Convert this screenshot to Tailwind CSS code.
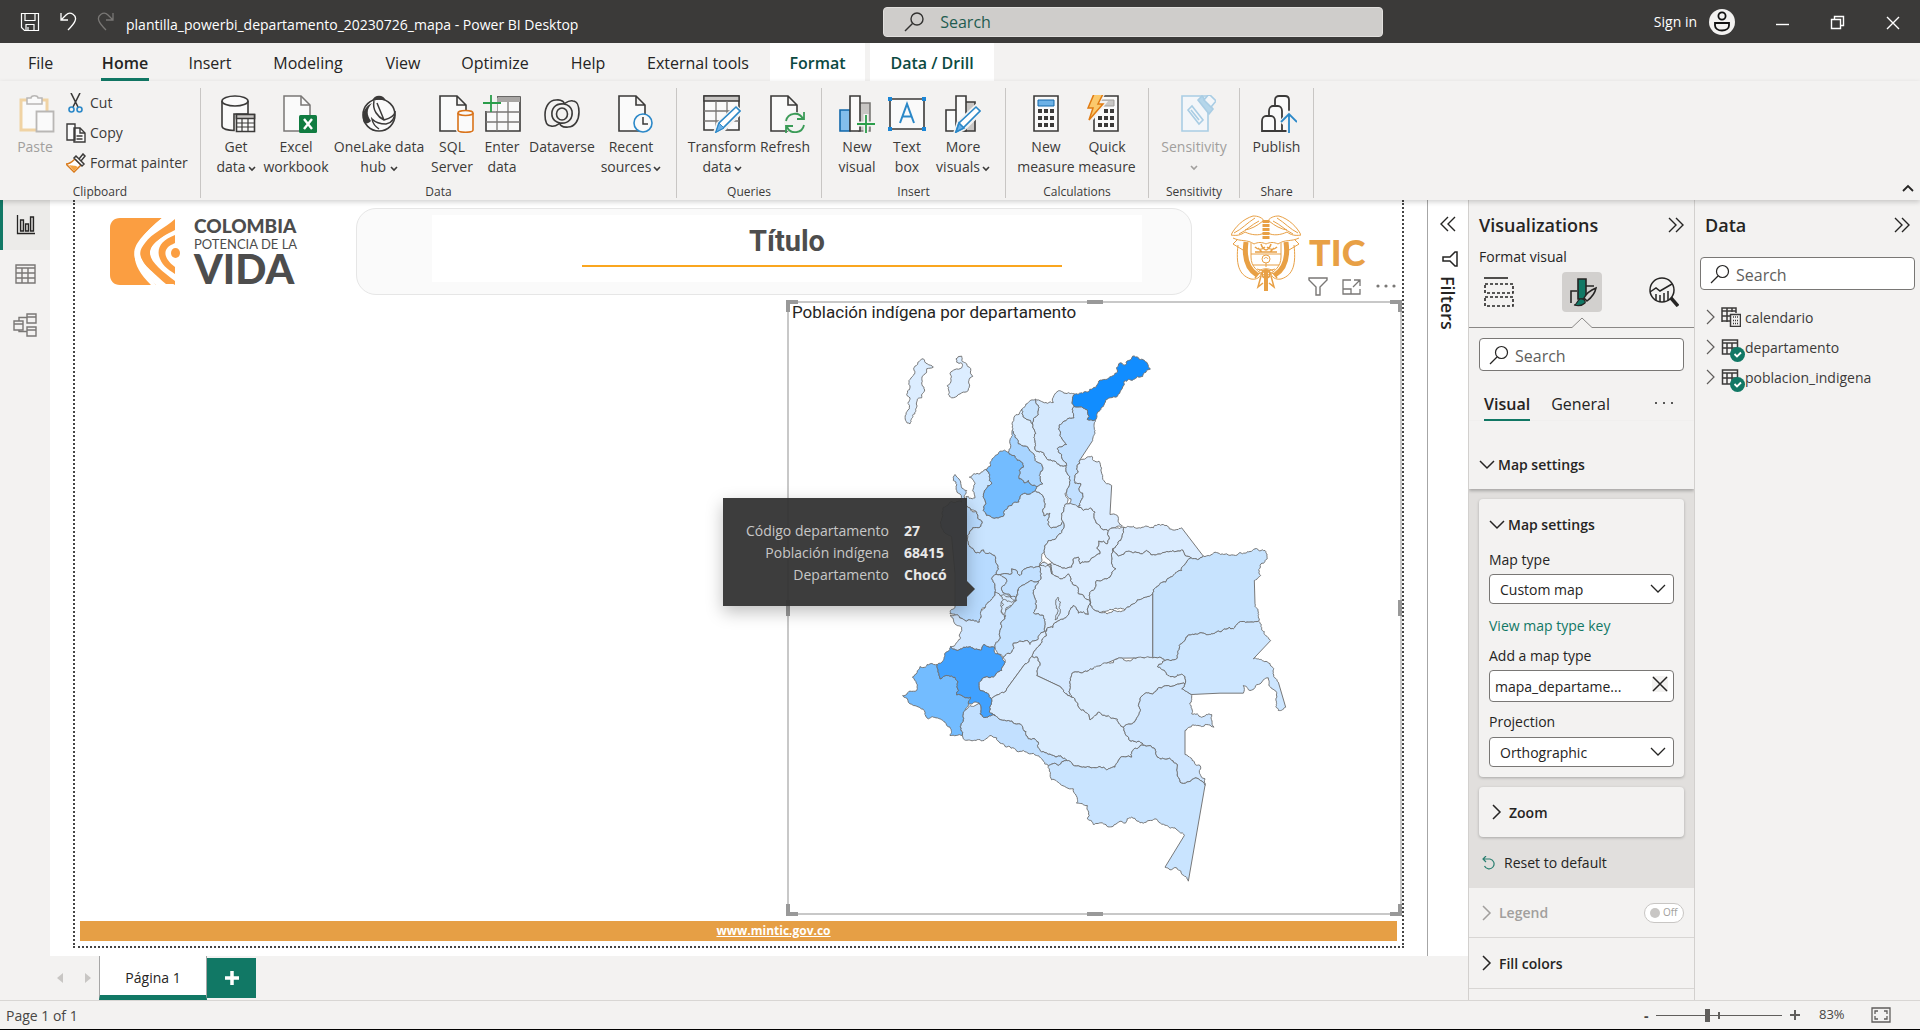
<!DOCTYPE html>
<html lang="en">
<head>
<meta charset="utf-8">
<title>plantilla_powerbi_departamento_20230726_mapa - Power BI Desktop</title>
<script src="https://cdn.jsdelivr.net/npm/@tailwindcss/browser@4"></script>
</head>
<body class="flex h-screen flex-col overflow-hidden border-b border-black bg-[#f3f2f1] font-['Open_Sans',sans-serif] text-[14px] text-[#252423]">

<!-- Title bar -->
<header class="flex h-[43px] shrink-0 items-center bg-[#3b3a39] text-white">
  <div class="flex w-[46%] shrink-0 items-center pl-5">
    <button aria-label="Save" class="w-[22px]"><svg class="h-5 w-5" viewBox="0 0 20 20" fill="none" stroke="#fff" stroke-width="1.2"><path d="M1.5 1.5h17v17H4.500l-3-3zM5 1.500v7h10v-7M6 18.500v-6h8v6M8 15v3"/></svg></button>
    <button aria-label="Undo" class="ml-[17px] w-[20px]"><svg class="h-5 w-5" viewBox="0 0 20 20" fill="none" stroke="#fff" stroke-width="1.3"><path d="M2 1v7h7M2 8l5-5a5.500 5.500 0 0 1 9 6c-1 3-4 6-7 9"/></svg></button>
    <button aria-label="Redo" class="ml-[16px] w-[20px]"><svg class="h-5 w-5" viewBox="0 0 20 20" fill="none" stroke="#797775" stroke-width="1.3"><path d="M18 1v7h-7M18 8l-5-5a5.500 5.500 0 0 0-9 6c1 3 4 6 7 9"/></svg></button>
    <span class="ml-[11px] pt-[6px] text-[14px]">plantilla_powerbi_departamento_20230726_mapa - Power BI Desktop</span>
  </div>
  <label class="flex h-[30px] w-[500px] items-center rounded-sm border border-[#e1dfdd] bg-[#cfcdcb] pl-5">
    <svg class="h-5 w-5" viewBox="0 0 20 20" fill="none" stroke="#323130" stroke-width="1.4"><circle cx="13" cy="7" r="6"/><path d="M8.500 11.500 1 19"/></svg>
    <input type="text" aria-label="Search" placeholder="Search" class="ml-4 w-80 bg-transparent text-[16px] outline-none placeholder:text-[#1f5c50]">
  </label>
  <div class="flex flex-1 items-center justify-end">
    <button class="flex items-center gap-3">Sign in
      <svg class="h-[26px] w-[26px]" viewBox="0 0 26 26"><circle cx="13" cy="13" r="13" fill="#f3f2f1"/><g fill="none" stroke="#111" stroke-width="1.800"><circle cx="13" cy="7" r="3.600"/><path d="M6 14h14v2.500c0 3-3 5-7 5s-7-2-7-5z"/></g></svg>
    </button>
    <button aria-label="Minimize" class="ml-[40px]"><svg class="h-4 w-4" viewBox="0 0 16 16" stroke="#fff" stroke-width="1.400"><path d="M1 10.500h13"/></svg></button>
    <button aria-label="Restore" class="ml-[39px]"><svg class="h-4 w-4" viewBox="0 0 16 16" fill="none" stroke="#fff" stroke-width="1.400"><path d="M1.500 5.500h9v9h-9zM4.500 5V2.500h9v9H11"/></svg></button>
    <button aria-label="Close" class="ml-[39px] mr-[19px]"><svg class="h-4 w-4" viewBox="0 0 16 16" stroke="#fff" stroke-width="1.400"><path d="m2 3 12 12M14 3 2 15"/></svg></button>
  </div>
</header>

<!-- Ribbon tabs -->
<nav class="flex h-[38px] shrink-0 pl-2 text-[16px]">
  <a href="#" class="w-[73px] pl-5 leading-[40px]">File</a>
  <a href="#" class="w-[88px] px-5 font-semibold"><span class="block h-[38px] border-b-3 border-[#117865] text-center leading-[40px]">Home</span></a>
  <a href="#" class="w-[82px] text-center leading-[40px]">Insert</a>
  <a href="#" class="w-[114px] text-center leading-[40px]">Modeling</a>
  <a href="#" class="w-[76px] text-center leading-[40px]">View</a>
  <a href="#" class="w-[108px] text-center leading-[40px]">Optimize</a>
  <a href="#" class="w-[78px] text-center leading-[40px]">Help</a>
  <a href="#" class="w-[142px] text-center leading-[40px]">External tools</a>
  <a href="#" class="ml-px w-[95px] bg-white text-center font-semibold leading-[40px] text-[#0b4a41]">Format</a>
  <a href="#" class="ml-[5px] w-[124px] bg-white text-center font-semibold leading-[40px] text-[#0b4a41]">Data / Drill</a>
</nav>

<!-- Ribbon -->
<section class="relative z-10 flex h-[119px] shrink-0 pt-[7px] text-[14px] leading-5 text-[#3b3a39] shadow-[0_2px_5px_rgba(0,0,0,0.18)]">
  <div class="flex h-[110px] w-[201px] flex-col border-r border-[#c8c6c4]">
    <div class="flex flex-1 pl-3">
      <button class="flex w-[46px] flex-col items-center pt-[7px] text-[#a19f9d]">
        <svg class="mb-1 ml-1 h-[38px] w-9" viewBox="0 0 36 38" fill="#fafafa"><path d="M2 5h26v30H2z" stroke="#f0d3a4" stroke-width="3"/><path d="M8 3h4c0-3 7-3 7 0h4v6H8z" stroke="#b9b7b5" stroke-width="1.500"/><path d="M17.500 16.500h17v20h-17z" stroke="#b9b7b5" stroke-width="1.800"/></svg>
        Paste</button>
      <div class="ml-2 flex flex-col">
        <button class="flex h-[30px] items-center gap-1"><svg class="h-5 w-5" viewBox="0 0 20 20" fill="none" stroke="#3b3a39" stroke-width="1.600"><path d="m5 0 7 14M14 0 7 14"/><g stroke="#2b88c8"><circle cx="5.500" cy="16.500" r="2.500"/><circle cx="13.500" cy="16.500" r="2.500"/></g></svg>Cut</button>
        <button class="flex h-[30px] items-center gap-1"><svg class="h-5 w-5" viewBox="0 0 20 20" fill="#fafafa" stroke="#3b3a39" stroke-width="1.400"><path d="M1 1h8v16H1zM8 5h6l5 5v9H8z"/><path d="M14 5v5h5M10.500 13h6M10.500 16h6" fill="none"/></svg>Copy</button>
        <button class="flex h-[30px] items-center gap-1"><svg class="h-5 w-5" viewBox="0 0 20 20" stroke-width="1.500"><path d="m9 6 6 6-7 7-8-8c4 0 6-2 9-5z" fill="#fff" stroke="#d97a1a"/><path d="M3 12c4 1 6 0 9 2l-4 4z" fill="#f4a340"/><path d="m8 5 2-2 8 8-2 2zM13 6l4-5 2 2-4 5z" fill="#fff" stroke="#3b3a39"/></svg>Format painter</button>
      </div>
    </div>
    <div class="h-[15px] text-center text-[12px] leading-[18px]">Clipboard</div>
  </div>

  <div class="flex h-[110px] w-[476px] flex-col border-r border-[#c8c6c4]">
    <div class="flex flex-1 pl-[11px] *:flex *:flex-col *:items-center *:pt-[7px]">
      <button class="w-12"><svg class="mb-1 ml-1 h-[38px] w-9" viewBox="0 0 36 38" fill="#fafafa" stroke="#3b3a39" stroke-width="1.600"><path d="M2 6v25c0 3 6 4.500 12 4.500V19h14V6"/><ellipse cx="15" cy="6" rx="13" ry="5"/><path d="M16.500 19.500h18v17h-18z"/><path d="M16.500 19.500h18v4h-18z" fill="#c8c6c4"/><path d="M22 23v13M28 23v13M17 28h17M17 32h17" stroke-width="1.200"/></svg><span class="whitespace-nowrap">Get<br>data<svg class="ml-[2px] inline h-2 w-2" viewBox="0 0 8 8" fill="none" stroke="#3b3a39" stroke-width="1.600"><path d="m1 3 3 3 3-3"/></svg></span></button>
      <button class="w-[72px]"><svg class="mb-1 ml-2 h-[38px] w-9" viewBox="0 0 36 38"><path d="M2 1h17l9 9v26H2z" fill="#fafafa" stroke="#797775" stroke-width="1.500"/><path d="M19 1v9h9" fill="none" stroke="#797775" stroke-width="1.500"/><rect x="17" y="20" width="18" height="18" rx="1.500" fill="#107c41"/><path d="m22 24 8 10m0-10-8 10" stroke="#fff" stroke-width="2.400"/></svg><span>Excel<br>workbook</span></button>
      <button class="w-[94px]"><svg class="mb-1 h-[38px] w-9" viewBox="0 0 36 38"><circle cx="18" cy="20" r="16" fill="#fafafa" stroke="#3b3a39" stroke-width="1.600"/><path d="M11 6C13-1 23-1 25 6c-5-2-9-1-14 0zM11 8C3 12 0 20 3 28c3 1 5 0 7-2-5-7-4-12 1-18z" fill="#3b3a39"/><path d="M13 6c-2 9 4 16 10 19 7-2 11-5 11-9 0 8-3 12-9 13-6 0-11-2-14-5 1 6 4 8 7 10M23 25 16 8" fill="none" stroke="#3b3a39" stroke-width="1.500"/></svg><span class="whitespace-nowrap">OneLake data<br>hub <svg class="inline h-2 w-2" viewBox="0 0 8 8" fill="none" stroke="#3b3a39" stroke-width="1.600"><path d="m1 3 3 3 3-3"/></svg></span></button>
      <button class="w-[52px]"><svg class="mb-1 ml-2 h-[38px] w-9" viewBox="0 0 36 38" fill="#fafafa"><path d="M2 1h17l9 9v26H2zM19 1v9h9" stroke="#3b3a39" stroke-width="1.600"/><path d="M20 18v17c0 3 15 3 15 0V18z" stroke="#fafafa" stroke-width="4"/><path d="M20 18v17c0 3 15 3 15 0V18" stroke="#d9731a" stroke-width="1.600"/><ellipse cx="27.500" cy="18" rx="7.500" ry="2.500" stroke="#d9731a" stroke-width="1.600"/></svg><span>SQL<br>Server</span></button>
      <button class="w-12"><svg class="mb-1 h-[38px] w-[38px]" viewBox="0 0 38 38"><path d="M3 2h34v34H3z" fill="#fafafa" stroke="#3b3a39" stroke-width="1.600"/><path d="M15 2h22v5H15z" fill="#a8a6a4"/><path d="M14 2v34M25 7v29M3 17h34M3 27h34" stroke="#797775" stroke-width="1.300"/><path d="M0 0h14v16H0z" fill="#f3f2f1"/><path d="M8 0v17M0 8h18" stroke="#2a9d4a" stroke-width="1.800"/></svg><span>Enter<br>data</span></button>
      <button class="w-[72px]"><svg class="mb-1 h-[38px] w-9" viewBox="0 0 36 38" fill="none" stroke="#3b3a39" stroke-width="1.600"><path d="M12 5C5 5 1 12 1 20c0 7 2 11 6 11 4 1 6-1 9-3M24 32c7 0 11-7 11-15 0-6-2-11-6-11-4-1-6 1-9 3"/><path d="M12 5c6-1 9 3 8 4-9-1-13 5-12 12 1 4 3 6 8 7M24 32c-6 1-9-3-8-4 9 1 13-5 12-12-1-4-3-6-8-7"/><ellipse cx="18" cy="19" rx="5.500" ry="6"/></svg><span>Dataverse</span></button>
      <button class="w-[66px]"><svg class="mb-1 ml-2 h-[38px] w-9" viewBox="0 0 36 38" fill="#fafafa"><path d="M2 1h17l9 9v26H2zM19 1v9h9" stroke="#3b3a39" stroke-width="1.600"/><circle cx="26" cy="28" r="9" stroke="#2b88c8" stroke-width="1.600"/><path d="M26 22v7h5" fill="none" stroke="#3b3a39" stroke-width="1.500"/></svg><span class="whitespace-nowrap">Recent<br>sources<svg class="ml-[2px] inline h-2 w-2" viewBox="0 0 8 8" fill="none" stroke="#3b3a39" stroke-width="1.600"><path d="m1 3 3 3 3-3"/></svg></span></button>
    </div>
    <div class="h-[15px] text-center text-[12px] leading-[18px]">Data</div>
  </div>

  <div class="flex h-[110px] w-[145px] flex-col border-r border-[#c8c6c4]">
    <div class="flex flex-1 pl-[9px] *:flex *:flex-col *:items-center *:pt-[7px]">
      <button class="w-[72px]"><svg class="mb-1 h-[38px] w-[38px]" viewBox="0 0 38 38"><path d="M1 1h35v34H1z" fill="#fafafa" stroke="#3b3a39" stroke-width="1.600"/><path d="M1 1h35v5H1z" fill="#c8c6c4" stroke="#3b3a39" stroke-width="1.300"/><path d="M13 6v29M24 6v29M1 16h35M1 26h35" stroke="#797775" stroke-width="1.300"/><path d="m12 38 3-9 18-17 5 5-17 17z" fill="#fafafa" stroke="#f3f2f1" stroke-width="4"/><path d="m13 37 3-9 17-16 4 4-17 17z" fill="#fff" stroke="#2b88c8" stroke-width="1.600"/><path d="m13 37 3-9 5 5z" fill="#6cb1e6" stroke="#2b88c8"/></svg><span class="whitespace-nowrap">Transform<br>data<svg class="ml-[2px] inline h-2 w-2" viewBox="0 0 8 8" fill="none" stroke="#3b3a39" stroke-width="1.600"><path d="m1 3 3 3 3-3"/></svg></span></button>
      <button class="w-[54px]"><svg class="mb-1 ml-1 h-[38px] w-9" viewBox="0 0 36 38" fill="#fafafa"><path d="M2 1h17l9 9v26H2zM19 1v9h9" stroke="#3b3a39" stroke-width="1.600"/><circle cx="26" cy="28" r="11" fill="#f3f2f1"/><path d="M17 26a9 9 0 0 1 17-2M35 17v7h-7M35 30a9 9 0 0 1-17 2M17 38v-7h7" fill="none" stroke="#3a9b57" stroke-width="1.800"/></svg><span>Refresh</span></button>
    </div>
    <div class="h-[15px] text-center text-[12px] leading-[18px]">Queries</div>
  </div>

  <div class="flex h-[110px] w-[184px] flex-col border-r border-[#c8c6c4]">
    <div class="flex flex-1 pl-[10px] *:flex *:flex-col *:items-center *:pt-[7px]">
      <button class="w-[50px]"><svg class="mb-1 h-[38px] w-9" viewBox="0 0 36 38" stroke-width="1.600"><path d="M20 8h11v28H20z" fill="#c8c6c4" stroke="#797775"/><path d="M1 15h10v21H1z" fill="#83beec" stroke="#1268ab"/><path d="M11 1h10v35H11z" fill="#fafafa" stroke="#3b3a39"/><path d="M27 19v19M18 29h18" stroke="#f3f2f1" stroke-width="5"/><path d="M27 20v18M18 29h18" stroke="#2a9d4a" stroke-width="1.800"/></svg><span>New<br>visual</span></button>
      <button class="w-[50px]"><svg class="mb-1 h-[38px] w-10" viewBox="0 0 40 38"><path d="M3 4h34v30H3z" fill="#fafafa" stroke="#3b3a39" stroke-width="1.600"/><path d="M1 2h4v4H1zM35 2h4v4h-4zM1 32h4v4H1zM35 32h4v4h-4z" fill="#1b86d6"/><path d="m13 28 7-19 7 19M15.500 21.500h9" fill="none" stroke="#2b88c8" stroke-width="2"/></svg><span>Text<br>box</span></button>
      <button class="w-[62px]"><svg class="mb-1 h-[38px] w-9" viewBox="0 0 36 38" stroke-width="1.600"><path d="M20 7h10v29H20z" fill="#c8c6c4" stroke="#3b3a39"/><path d="M1 15h10v21H1zM11 1h10v35H11z" fill="#fafafa" stroke="#3b3a39"/><path d="m11 37 3-9 17-16 5 4-17 17z" fill="#fff" stroke="#f3f2f1" stroke-width="5"/><path d="m11 37 3-9 17-16 4 4-17 17z" fill="#fff" stroke="#2b88c8"/><path d="m11 37 3-9 5 5z" fill="#6cb1e6" stroke="#2b88c8"/></svg><span class="whitespace-nowrap">More<br>visuals<svg class="ml-[2px] inline h-2 w-2" viewBox="0 0 8 8" fill="none" stroke="#3b3a39" stroke-width="1.600"><path d="m1 3 3 3 3-3"/></svg></span></button>
    </div>
    <div class="h-[15px] text-center text-[12px] leading-[18px]">Insert</div>
  </div>

  <div class="flex h-[110px] w-[143px] flex-col border-r border-[#c8c6c4]">
    <div class="flex flex-1 justify-center *:flex *:flex-col *:items-center *:pt-[7px]">
      <button class="w-[60px]"><svg class="mb-1 h-[38px] w-[26px]" viewBox="0 0 26 38"><path d="M1 1h24v35H1z" fill="#fafafa" stroke="#3b3a39" stroke-width="1.600"/><path d="M5 5h16v6H5z" fill="#6cb1e6" stroke="#1268ab"/><g fill="#3b3a39"><path d="M5 14h4v4H5zM11 14h4v4h-4zM17 14h4v4h-4zM5 21h4v4H5zM11 21h4v4h-4zM17 21h4v4h-4zM5 28h4v4H5zM11 28h4v4h-4zM17 28h4v4h-4z"/></g></svg><span>New<br>measure</span></button>
      <button class="w-[62px]"><svg class="mb-1 mr-2 h-[38px] w-8" viewBox="0 0 32 38"><path d="M7 1h24v35H7z" fill="#fafafa" stroke="#3b3a39" stroke-width="1.600"/><path d="M14 5h13v6H14z" fill="#c8c6c4" stroke="#a19f9d"/><g fill="#3b3a39"><path d="M17 14h4v4h-4zM23 14h4v4h-4zM11 21h4v4h-4zM17 21h4v4h-4zM23 21h4v4h-4zM11 28h4v4h-4zM17 28h4v4h-4zM23 28h4v4h-4z"/></g><path d="M6-1h10l-5 9h6L2 27l4-13H0z" fill="#fcd04b" stroke="#f3f2f1" stroke-width="4"/><path d="M7-1h9l-5 10h5L2 25l4-12H1z" fill="#fbc96c" stroke="#e07b12" stroke-width="1.500"/></svg><span>Quick<br>measure</span></button>
    </div>
    <div class="h-[15px] text-center text-[12px] leading-[18px]">Calculations</div>
  </div>

  <div class="flex h-[110px] w-[91px] flex-col border-r border-[#c8c6c4]">
    <div class="flex flex-1 justify-center *:flex *:flex-col *:items-center *:pt-[7px]">
      <button class="text-[#a19f9d]"><svg class="mb-1 ml-2 h-[38px] w-9" viewBox="0 0 36 38" fill="#f3f6f9" stroke="#a9cde4" stroke-width="1.600"><path d="M2 1h26v35H2z"/><path d="m8 15 4-4 11 14-4 4zM11 15l8 10"/><path d="m18 5 4-4 11 13-4 5z" fill="#b5d6ea"/><path d="m24 5 5-6 7 7-5 6z"/></svg><span>Sensitivity<br><svg class="inline h-2 w-2" viewBox="0 0 8 8" fill="none" stroke="#a19f9d" stroke-width="1.600"><path d="m1 2 3 3 3-3"/></svg></span></button>
    </div>
    <div class="h-[15px] text-center text-[12px] leading-[18px]">Sensitivity</div>
  </div>

  <div class="flex h-[110px] w-[74px] flex-col border-r border-[#c8c6c4]">
    <div class="flex flex-1 justify-center *:flex *:flex-col *:items-center *:pt-[7px]">
      <button><svg class="mb-1 ml-1 h-[38px] w-9" viewBox="0 0 36 38" fill="#fafafa" stroke="#3b3a39" stroke-width="1.800"><path d="M14 36V5c0-3 2-4 4-4h6c2 0 4 1 4 4v31z"/><path d="M8 36V16c0-3 2-5 4-5h5c2 0 4 2 4 5v20z"/><path d="M1 36V26c0-3 2-5 4-5h5c2 0 4 2 4 5v10z"/><path d="M28 38V18M20 28l8-9 8 9" fill="none" stroke="#f3f2f1" stroke-width="5"/><path d="M28 38V19M20 27l8-8 8 8" fill="none" stroke="#2b88c8"/></svg><span>Publish</span></button>
    </div>
    <div class="h-[15px] text-center text-[12px] leading-[18px]">Share</div>
  </div>
  <button aria-label="Collapse ribbon" class="mb-[5px] ml-auto mr-[6px] self-end"><svg class="h-3 w-3" viewBox="0 0 12 12" fill="none" stroke="#252423" stroke-width="1.800"><path d="m1 8 5-5 5 5"/></svg></button>
</section>

<!-- Workspace -->
<div class="flex min-h-0 flex-1">
  <div class="flex min-w-0 flex-1 flex-col">
    <div class="flex min-h-0 flex-1">
      <nav class="flex w-[50px] shrink-0 flex-col">
        <button aria-label="Report view" class="flex h-[50px] w-full items-center border-l-3 border-[#117865] bg-[#ecebe9] pl-[13px]"><svg class="h-5 w-5" viewBox="0 0 20 20" fill="#c8c6c4" stroke="#252423" stroke-width="1.300"><path d="M1.500 0v18.500H19" fill="none"/><path d="M4.500 5h3v11h-3zM9.500 9h3v7h-3zM14.500 2h3v14h-3z"/></svg></button>
        <button aria-label="Table view" class="flex h-12 w-full items-center pl-[15px]"><svg class="h-5 w-[21px]" viewBox="0 0 21 20" fill="none" stroke="#797775" stroke-width="1.400"><path d="M1 1h19v18H1zM1 4h19M1 9h19M1 14h19M7 4v15M13 4v15"/></svg></button>
        <button aria-label="Model view" class="flex h-[54px] w-full items-center pl-[13px]"><svg class="h-6 w-6" viewBox="0 0 24 24" fill="#f3f2f1" stroke="#797775" stroke-width="1.400"><path d="M14 4.500H6v14h8"/><path d="M14 1h9v9h-9zM14 4h9M1 8h9v9H1zM1 11h9M14 14h9v9h-9zM14 17h9"/></svg></button>
      </nav>

      <main class="flex min-w-0 flex-1 bg-white pb-2 pl-[23px] pr-[23px]">
        <article class="flex min-w-0 flex-1 flex-col border-x-2 border-b-2 border-dotted border-[#444] pt-2">
          <div class="relative flex h-[93px] shrink-0 items-start pl-[35px] pr-[36px]">
            <svg class="mt-[10px] h-[67px] w-[70px] shrink-0" viewBox="0 0 70 67"><path d="M10 0H52C30 20 14 32 32 52 37 58 42 62 46 67H10C4 67 0 63 0 57V10C0 4 4 0 10 0z" fill="#fb9e41"/><path d="M65 1v11C44 22 38 30 40 38c2 9 10 15 25 28h-9C28 42 26 36 35 25 42 15 55 10 65 1z" fill="#fb9e41"/><path d="M52 0H60C30 22 18 34 38 56l8 11h-5C16 42 20 26 52 0z" fill="#fff"/><path d="M65 3C42 20 24 29 34 45c7 10 20 15 31 22v-4C53 54 40 44 40 35c0-10 12-15 25-26z" fill="#fb9e41"/><path d="M65 17C52 22 47 29 49 38c2 8 8 13 16 18v-7C57 43 54 37 56 32c2-4 5-5 9-7z" fill="#fb9e41"/><ellipse cx="65.500" cy="35" rx="4.500" ry="5" fill="#fb9e41"/></svg>
            <div class="ml-[14px] mt-[8px] w-[102px] whitespace-nowrap font-[Lato] text-[#4d4d4d]">
              <p class="text-[19px] font-black leading-5">COLOMBIA</p>
              <p class="text-[13px] leading-4">POTENCIA DE LA</p>
              <p class="text-[41px] font-black leading-[34px]">VIDA</p>
            </div>
            <div class="ml-[60px] h-[87px] flex-1 rounded-[20px] border border-[#e6e6e6] bg-[#fafafa] pl-[75px] pr-[49px] pt-[6px]">
              <div class="h-[67px] bg-white pt-[6px] text-center">
                <h1 class="font-['Roboto'] text-[29px] font-bold leading-[40px] text-[#4d4d4d]">Título</h1>
                <hr class="ml-[150px] mr-[80px] mt-[4px] border-t-2 border-[#faa61f]">
              </div>
            </div>
            <svg class="ml-[39px] mt-[7px] h-[76px] w-[70px] shrink-0" viewBox="0 0 70 76" fill="none" stroke="#e8a045" stroke-width="1">
              <path d="M35 8c-4-6-8-7-13-7C12 4 4 12 0 20c6 1 10 0 14-3 6 3 14 4 19 1M35 8c4-6 8-7 13-7 10 3 18 11 22 19-6 1-10 0-14-3-6 3-14 4-19 1M3 18C11 14 16 8 24 3M8 19c8-4 12-9 20-13M67 18C59 14 54 8 46 3M62 19c-8-4-12-9-20-13M14 15c6-1 12-4 18-9M56 15c-6-1-12-4-18-9"/>
              <path d="M2 23c8 4 14 1 21 6 4-2 8-2 12 0 4-2 8-2 12 0 7-5 13-2 21-6M6 25l-4 4 10 6M64 25l4 4-10 6M7 30C5 48 7 60 20 64c6 1 9-2 10-5M63 30c2 18 0 30-13 34-6 1-9-2-10-5M20 28v14c0 10 7 15 15 19 8-4 15-9 15-19V28M20 39h30M22 50h26"/>
              <path d="M15 27c-2 14 0 26 11 33M55 27c2 14 0 26-11 33" stroke-width="5"/>
              <path d="M35 5v20" stroke-width="7" stroke-dasharray="3 1"/>
              <path d="M24 32c3 3 7 3 10 0M46 32c-3 3-7 3-10 0M24 37h22M30 29c1 4 4 6 5 6s4-2 5-6M27 33l4 4M43 33l-4 4" stroke-width="1.500"/>
              <circle cx="35" cy="44" r="4"/><path d="M33 44c1-2 3-2 4 0M35 48v4M28 56c4-3 10-3 14 0M26 54l18 5M44 54l-18 5"/>
              <path d="M35 56v20" stroke-width="4"/><path d="M30 61l-3 11 5-4M40 61l3 11-5-4M28 58l-4 5M42 58l4 5" stroke-width="1.500"/><circle cx="35" cy="59" r="4" stroke-width="2"/>
            </svg>
            <p class="ml-2 mt-[22px] w-[57px] whitespace-nowrap font-[Lato] text-[36px] font-black leading-[44px] text-[#e8a045]">TIC</p>
            <div class="absolute bottom-[4px] right-[6px] flex items-center gap-[14px]">
              <button aria-label="Filters on this visual"><svg class="h-5 w-5" viewBox="0 0 20 20" fill="none" stroke="#797775" stroke-width="1.400"><path d="M1 1h18v2l-7 7v8H8v-8L1 3z"/></svg></button>
              <button aria-label="Focus mode"><svg class="h-5 w-5" viewBox="0 0 20 20" fill="none" stroke="#797775" stroke-width="1.300"><path d="M9 3H1v14h17v-5M1 12h8v5M12 3h6v6M18 3l-7 7"/></svg></button>
              <button aria-label="More options"><svg class="h-5 w-5" viewBox="0 0 20 20" fill="#797775"><circle cx="2" cy="9" r="1.600"/><circle cx="10" cy="9" r="1.600"/><circle cx="18" cy="9" r="1.600"/></svg></button>
            </div>
          </div>

          <!-- Selected map visual -->
          <section class="relative ml-auto min-h-0 w-[615px] flex-1 border-2 border-[#c8c8c8]">
            <svg id="map" class="block h-full w-full" viewBox="-273 -771 1833 1827" stroke="#6f6f6f" stroke-width="2.800" stroke-linejoin="round" role="img" aria-label="Mapa de población indígena por departamento"></svg>
            <h2 class="absolute left-[3px] top-0 whitespace-nowrap font-['Roboto'] text-[17px] leading-[18px] text-[#252423]">Población indígena por departamento</h2>
            <i class="absolute -left-[3px] -top-[3px] h-3 w-3 border-l-4 border-t-4 border-[#999]"></i>
            <i class="absolute -right-[2px] -top-[3px] h-3 w-3 border-r-4 border-t-4 border-[#999]"></i>
            <i class="absolute -bottom-[3px] -left-[3px] h-3 w-3 border-b-4 border-l-4 border-[#999]"></i>
            <i class="absolute -bottom-[3px] -right-[2px] h-3 w-3 border-b-4 border-r-4 border-[#999]"></i>
            <i class="absolute -top-[3px] left-[298px] h-1 w-4 bg-[#999]"></i>
            <i class="absolute -bottom-[3px] left-[298px] h-1 w-4 bg-[#999]"></i>
            <i class="absolute -left-[3px] top-[297px] h-4 w-1 bg-[#999]"></i>
            <i class="absolute -right-[2px] top-[297px] h-4 w-1 bg-[#999]"></i>
            <div role="tooltip" class="absolute -left-[66px] top-[195px] h-[108px] w-[244px] bg-[#333]/95 pt-[22px] shadow-[0_6px_16px_rgba(0,0,0,0.25)]">
              <dl class="grid grid-cols-[166px_1fr] gap-x-[15px] text-[14px] leading-[22px] text-[#c8c8c8]">
                <dt class="whitespace-nowrap text-right">Código departamento</dt><dd class="font-bold text-[#e8e8e8]">27</dd>
                <dt class="whitespace-nowrap text-right">Población indígena</dt><dd class="font-bold text-[#e8e8e8]">68415</dd>
                <dt class="whitespace-nowrap text-right">Departamento</dt><dd class="font-bold text-[#e8e8e8]">Chocó</dd>
              </dl>
              <svg class="absolute -right-[8px] top-[83px] h-4 w-2" viewBox="0 0 8 16"><path d="M0 0v16l8-8z" fill="#3b3b3b"/></svg>
            </div>
          </section>

          <div class="mx-[5px] mb-[5px] mt-[6px] h-[20px] shrink-0 bg-[#e69f45] pl-[70px] text-center leading-[18px]"><a href="#" class="text-[12px] font-bold text-white underline">www.mintic.gov.co</a></div>
        </article>
      </main>

      <aside class="flex w-[41px] shrink-0 flex-col items-center border-l border-[#a6a6a6] bg-white pt-4">
        <button aria-label="Expand filters"><svg class="h-4 w-4" viewBox="0 0 16 16" fill="none" stroke="#252423" stroke-width="1.400"><path d="M8 1 1 8l7 7M15 1 8 8l7 7"/></svg></button>
        <svg class="ml-1 mt-[19px] h-4 w-4" viewBox="0 0 16 16" fill="none" stroke="#252423" stroke-width="1.500"><path d="M15 1v14h-2L8 10H1V6h7l5-5z"/></svg>
        <h2 class="mt-[9px] text-[18px] font-semibold leading-5 [writing-mode:vertical-rl]">Filters</h2>
      </aside>
    </div>

    <!-- Page tabs -->
    <nav class="flex h-[44px] shrink-0 items-start">
      <button aria-label="Previous page" class="ml-[55px] mt-[16px]"><svg class="h-3 w-3" viewBox="0 0 12 12" fill="#c8c6c4"><path d="M8 1v10L2 6z"/></svg></button>
      <button aria-label="Next page" class="ml-[15px] mr-[5px] mt-[16px]"><svg class="h-3 w-3" viewBox="0 0 12 12" fill="#c8c6c4"><path d="M3 1v10l6-5z"/></svg></button>
      <button class="h-[44px] w-[108px] border-x border-b-5 border-x-[#a6a6a6] border-b-[#117865] bg-white pt-1 text-[14px] text-[#252423]">Página 1</button>
      <button aria-label="New page" class="mt-[2px] flex h-10 w-[49px] items-center justify-center bg-[#117865]"><svg class="h-[14px] w-[14px]" viewBox="0 0 14 14" stroke="#fff" stroke-width="3.500"><path d="M7 0v14M0 7h14"/></svg></button>
    </nav>
  </div>

  <!-- Visualizations -->
  <aside class="flex w-[227px] shrink-0 flex-col overflow-hidden border-x border-[#d2d0ce]">
    <div class="flex items-center justify-between pl-[10px] pr-[10px] pt-3">
      <h2 class="text-[18px] font-semibold leading-[26px]">Visualizations</h2>
      <button aria-label="Collapse visualizations"><svg class="h-4 w-4" viewBox="0 0 16 16" fill="none" stroke="#252423" stroke-width="1.400"><path d="m1 1 7 7-7 7M8 1l7 7-7 7"/></svg></button>
    </div>
    <p class="mt-[9px] pl-[10px] text-[14px] font-medium leading-5">Format visual</p>
    <div class="mt-[5px] flex justify-between px-[15px]">
      <button aria-label="Build visual"><svg class="h-[30px] w-[30px]" viewBox="0 0 30 30" fill="none" stroke="#252423" stroke-width="1.600"><path d="M0 1h24"/><path d="M1 7h28v9H1zM1 20h28v9H1z" stroke-dasharray="3 2"/></svg></button>
      <button aria-label="Format visual" class="flex h-10 w-10 items-center justify-center rounded-sm bg-[#d2d0ce]"><svg class="h-[30px] w-[30px]" viewBox="0 0 30 30"><path d="M4 26V14h6M19 9h8" fill="none" stroke="#252423" stroke-width="1.600"/><path d="M11 2h8v20h-8z" fill="#117865" stroke="#252423" stroke-width="1.600"/><path d="M29 11c-5 2-10 6-12 10l3 3c4-3 8-8 9-13z" fill="#d2d0ce" stroke="#252423" stroke-width="1.500"/><path d="M7 28c3 0 3-5 6-6s6 2 5 4c-3 3-7 3-11 2z" fill="#117865" stroke="#252423" stroke-width="1.200"/></svg></button>
      <button aria-label="Analytics"><svg class="h-[30px] w-[30px]" viewBox="0 0 30 30" fill="none" stroke="#252423" stroke-width="1.500"><circle cx="13" cy="13" r="12"/><path d="m1 15 6-4 4 3 12-7M7 23v-6M11 25v-7M15 25v-9M19 23v-9"/><path d="m22 21 7 8" stroke-width="3.500"/></svg></button>
    </div>
    <div class="mt-[5px] flex h-[11px] shrink-0 items-end"><span class="h-px w-[103px] bg-[#8a8886]"></span><svg class="h-[11px] w-5" viewBox="0 0 20 11" fill="none" stroke="#8a8886" stroke-width="1"><path d="m0 10.500 10-9.500 10 9.500"/></svg><span class="h-px flex-1 bg-[#8a8886]"></span></div>
    <label class="mx-[10px] mt-[10px] flex h-[33px] shrink-0 items-center rounded-sm border border-[#797775] bg-white pl-[9px]">
      <svg class="h-5 w-5 shrink-0" viewBox="0 0 20 20" fill="none" stroke="#252423" stroke-width="1.200"><circle cx="12.500" cy="7.500" r="6"/><path d="M8 12 1 19"/></svg>
      <input type="text" aria-label="Search format options" placeholder="Search" class="ml-[6px] w-32 pt-[2px] text-[16px] outline-none placeholder:text-[#605e5c]">
    </label>
    <div class="mt-[20px] flex h-[30px] shrink-0 items-start pl-[15px] text-[16px] leading-[26px]">
      <a href="#" class="h-[30px] border-b-2 border-[#117865] font-semibold">Visual</a>
      <a href="#" class="ml-[21px]">General</a>
      <button aria-label="More" class="ml-auto mr-5 mt-1"><svg class="h-5 w-5" viewBox="0 0 20 20" fill="#252423"><circle cx="2" cy="8" r="1"/><circle cx="10" cy="8" r="1"/><circle cx="18" cy="8" r="1"/></svg></button>
    </div>
    <button class="relative z-10 flex h-[68px] w-full shrink-0 items-center gap-[3px] pl-[10px] pt-[19px] text-[14px] font-semibold shadow-[0_2px_3px_rgba(0,0,0,0.25)]"><svg class="h-4 w-4" viewBox="0 0 16 16" fill="none" stroke="#252423" stroke-width="1.500"><path d="m1 4 7 7 7-7"/></svg>Map settings</button>
    <div class="h-[399px] shrink-0 bg-[#e1dfdd] px-[10px] pt-[10px] text-[14px]">
      <div class="h-[278px] rounded-[4px] bg-[#f3f2f1] px-[10px] shadow-[0_1px_3px_rgba(0,0,0,0.25)]">
        <button class="flex h-[51px] items-center gap-[3px] font-semibold"><svg class="h-4 w-4" viewBox="0 0 16 16" fill="none" stroke="#252423" stroke-width="1.500"><path d="m1 4 7 7 7-7"/></svg>Map settings</button>
        <label class="block leading-5" for="mapType">Map type</label>
        <div class="relative mt-1">
          <select id="mapType" class="block h-[30px] w-full appearance-none rounded-sm border border-[#797775] bg-white pl-[10px]"><option>Custom map</option></select>
          <svg class="pointer-events-none absolute right-2 top-[7px] h-4 w-4" viewBox="0 0 16 16" fill="none" stroke="#252423" stroke-width="1.300"><path d="m1 4 7 7 7-7"/></svg>
        </div>
        <a href="#" class="mt-[12px] block leading-5 text-[#117865]">View map type key</a>
        <label class="mt-[10px] block leading-5" for="addMap">Add a map type</label>
        <div class="relative mt-1">
          <input id="addMap" type="text" value="mapa_departame..." class="block h-8 w-full rounded-sm border border-[#797775] bg-white pl-[5px]">
          <button aria-label="Clear" class="absolute right-[6px] top-[6px] bg-[#f3f2f1]"><svg class="h-4 w-4" viewBox="0 0 16 16" fill="none" stroke="#252423" stroke-width="1.500"><path d="m1 1 14 14M15 1 1 15"/></svg></button>
        </div>
        <label class="mt-[10px] block leading-5" for="proj">Projection</label>
        <div class="relative mt-[5px]">
          <select id="proj" class="block h-[30px] w-full appearance-none rounded-sm border border-[#797775] bg-white pl-[10px]"><option>Orthographic</option></select>
          <svg class="pointer-events-none absolute right-2 top-[7px] h-4 w-4" viewBox="0 0 16 16" fill="none" stroke="#252423" stroke-width="1.300"><path d="m1 4 7 7 7-7"/></svg>
        </div>
      </div>
      <button class="mt-[10px] flex h-[50px] w-full items-center gap-[4px] rounded-[4px] bg-[#f3f2f1] pl-[10px] font-semibold shadow-[0_1px_3px_rgba(0,0,0,0.25)]"><svg class="h-4 w-4" viewBox="0 0 16 16" fill="none" stroke="#252423" stroke-width="1.500"><path d="m4 1 7 7-7 7"/></svg>Zoom</button>
      <button class="mt-[16px] flex items-center gap-2 pl-[3px] leading-5"><svg class="h-[14px] w-[14px]" viewBox="0 0 14 14" fill="none" stroke="#2a7f70" stroke-width="1.200"><path d="M4 0 1 3l3 3M1 3h7a5 5 0 1 1-5.500 7"/></svg>Reset to default</button>
    </div>
    <div class="flex h-[50px] shrink-0 items-center border-b border-[#d8d6d4] pl-[10px] pr-[10px] text-[14px] font-semibold text-[#a19f9d]">
      <svg class="mr-1 h-4 w-4" viewBox="0 0 16 16" fill="none" stroke="#a19f9d" stroke-width="1.500"><path d="m4 1 7 7-7 7"/></svg>Legend
      <button role="switch" aria-checked="false" aria-label="Legend" class="ml-auto flex h-5 w-10 items-center gap-[3px] rounded-full border border-[#c8c6c4] bg-white pl-[5px] text-[10px] font-normal"><span class="h-[10px] w-[10px] rounded-full bg-[#c8c6c4]"></span>Off</button>
    </div>
    <button class="flex h-[51px] w-full shrink-0 items-center border-b border-[#d8d6d4] pl-[10px] text-[14px] font-semibold"><svg class="mr-1 h-4 w-4" viewBox="0 0 16 16" fill="none" stroke="#252423" stroke-width="1.500"><path d="m4 1 7 7-7 7"/></svg>Fill colors</button>
  </aside>

  <!-- Data -->
  <aside class="flex w-[225px] shrink-0 flex-col">
    <div class="flex items-center justify-between pl-[10px] pr-[10px] pt-3">
      <h2 class="text-[18px] font-semibold leading-[26px]">Data</h2>
      <button aria-label="Collapse data"><svg class="h-4 w-4" viewBox="0 0 16 16" fill="none" stroke="#252423" stroke-width="1.400"><path d="m1 1 7 7-7 7M8 1l7 7-7 7"/></svg></button>
    </div>
    <label class="ml-[5px] mr-[5px] mt-[19px] flex h-[33px] items-center rounded-sm border border-[#797775] bg-white pl-[9px]">
      <svg class="h-5 w-5 shrink-0" viewBox="0 0 20 20" fill="none" stroke="#252423" stroke-width="1.200"><circle cx="12.500" cy="7.500" r="6"/><path d="M8 12 1 19"/></svg>
      <input type="text" aria-label="Search data" placeholder="Search" class="ml-[6px] w-32 pt-[2px] text-[16px] outline-none placeholder:text-[#605e5c]">
    </label>
    <ul class="mt-[12px] text-[14px] text-[#3b3a39]">
      <li class="flex h-[30px] items-center pl-[10px]"><svg class="h-4 w-3" viewBox="0 0 12 16" fill="none" stroke="#605e5c" stroke-width="1.200"><path d="m2 1 7 7-7 7"/></svg><svg class="ml-1 mr-1 h-5 w-5" viewBox="0 0 20 20" fill="none" stroke="#3b3a39" stroke-width="1.500"><path d="M1 15V1h14v5M1 4h14M1 9h8M1 14h8M6 1v14M11 1v4"/><path d="M9.500 7.500h10v12h-10z" fill="#f3f2f1"/><path d="M12 10h5M12 13.500h5M12 16.500h5" stroke-dasharray="1 1"/></svg>calendario</li>
      <li class="flex h-[30px] items-center pl-[10px]"><svg class="h-4 w-3" viewBox="0 0 12 16" fill="none" stroke="#605e5c" stroke-width="1.200"><path d="m2 1 7 7-7 7"/></svg><svg class="-mb-2 ml-1 h-6 w-6" viewBox="0 0 24 24" fill="none" stroke="#3b3a39" stroke-width="1.500"><path d="M1.500 1h15v14h-15zM1 4h16M1 9h16M6 4v11M11 4v11"/><circle cx="16.500" cy="15.500" r="7.500" fill="#117865" stroke="none"/><path d="m13.500 15 2.500 2.500 4-4" stroke="#fff" stroke-width="1.800"/></svg>departamento</li>
      <li class="flex h-[30px] items-center pl-[10px]"><svg class="h-4 w-3" viewBox="0 0 12 16" fill="none" stroke="#605e5c" stroke-width="1.200"><path d="m2 1 7 7-7 7"/></svg><svg class="-mb-2 ml-1 h-6 w-6" viewBox="0 0 24 24" fill="none" stroke="#3b3a39" stroke-width="1.500"><path d="M1.500 1h15v14h-15zM1 4h16M1 9h16M6 4v11M11 4v11"/><circle cx="16.500" cy="15.500" r="7.500" fill="#117865" stroke="none"/><path d="m13.500 15 2.500 2.500 4-4" stroke="#fff" stroke-width="1.800"/></svg>poblacion_indigena</li>
    </ul>
  </aside>
</div>

<!-- Status bar -->
<footer class="flex h-[29px] shrink-0 items-center border-t border-[#d8d6d4] pl-[6px] pr-[29px] text-[14px] text-[#484644]">
  <span class="flex-1">Page 1 of 1</span>
  <button aria-label="Zoom out" class="w-[12px] text-left font-bold">-</button>
  <svg class="h-5 w-[126px]" viewBox="0 0 126 20" fill="#605e5c"><path d="M0 10h126v1H0zM49 4h5v13h-5zM62 7h2v7h-2z"/></svg>
  <button aria-label="Zoom in" class="ml-[5px] flex w-4 justify-center"><svg class="h-[10px] w-[10px]" viewBox="0 0 10 10" stroke="#605e5c" stroke-width="2"><path d="M5 0v10M0 5h10"/></svg></button>
  <span class="ml-[16px] w-[31px] text-[13px]">83%</span>
  <button aria-label="Fit to page" class="ml-[21px]"><svg class="h-4 w-5" viewBox="0 0 20 16" fill="none" stroke="#605e5c" stroke-width="1.300"><path d="M1 1h18v14H1zM4 7V4h3M13 4h3v3M16 9v3h-3M7 12H4V9"/></svg></button>
</footer>

<script>
// Department outlines: fill, x/y offset of the tile, then the vertices.
const departments = [
["#d5e9fe",0,0,"350,62 420,75 470,70 462,150 385,190 350,110"],
["#dcedff",-540,-810,"670,205 682,220 700,230 680,235 670,255 672,290 665,322 653,325 650,350 630,400 617,390 618,372 628,355 630,322 620,312 627,270 640,255 642,232"],
["#dcedff",-540,-810,"768,205 775,198 785,197 787,213 800,220 803,228 808,230 812,250 818,258 808,265 808,290 795,305 775,312 755,322 745,312 742,285 750,250 765,237 785,232 785,218 770,215"],
["#b8dbff",-540,-810,"765,552 780,570 800,600 806,650 830,665 847,695 840,710 818,712 803,735 825,785 875,790 890,820 890,852 875,865 885,905 865,935 845,955 845,975 838,995 800,992 775,975 750,970 765,950 765,850 755,740 725,690 730,650 785,635 770,600 760,570"],
["#c9e4ff",-540,-810,"857,537 840,550 808,560 825,580 825,622 808,624 805,618 798,618 803,650 830,665 847,695 840,710 818,712 803,735 825,785 875,790 890,820 890,852 935,850 935,835 950,840 960,855 1000,832 1018,828 1033,785 1045,750 1092,712 1088,692 1055,712 1043,690 1050,668 1032,676 1028,660 1036,640 1030,620 1006,600 965,612 935,645 917,657 910,677 860,675 850,660 850,620 875,580"],
["#dbedff",360,-690,"66,236 66,250 78,265 98,282 108,308 105,335 110,362 135,377 165,392 200,405 202,430 206,470 200,485 195,490 200,520 190,545 188,572 155,592 143,570 150,548 132,556 128,540 136,520 130,500 106,480 110,468 128,460 128,410 105,390 97,367 75,347 55,340 45,315 37,300 36,280 42,260"],
["#a8d4ff",360,-690,"37,300 45,315 55,340 75,347 97,367 105,390 128,410 128,460 110,468 85,450 72,457 57,445 57,420 70,410 65,395 45,377 25,365 32,350 30,328"],
["#d5e9fe",360,-690,"106,206 125,213 160,216 162,195 175,181 198,189 224,191 218,205 222,228 222,262 188,275 176,295 180,315 200,342 172,355 185,372 192,392 200,405 165,392 135,377 110,362 105,335 108,308 98,282 115,252 115,225"],
["#c7e3fe",360,-690,"106,206 115,225 115,252 98,282 78,265 66,250 66,236"],
["#c2e0ff",360,-690,"222,228 245,229 262,238 268,258 262,267 286,269 285,300 278,330 240,388 235,425 225,440 225,458 243,460 238,480 250,500 240,526 205,520 213,505 200,485 206,470 202,430 200,405 192,392 185,372 172,355 200,342 180,315 176,295 188,275 222,262"],
["#118dff",360,-690,"398,77 430,88 440,95 451,116 428,138 372,153 347,200 325,203 310,228 300,240 286,269 262,267 268,258 262,238 245,229 222,228 218,205 224,191 248,188 300,149 340,135 352,125 356,100 366,98 372,104 380,100 378,95 385,90"],
["#73bcff",-540,-810,"900,482 925,485 945,497 965,515 970,530 957,540 957,565 972,577 985,570 1010,588 1006,600 965,612 935,645 917,657 910,677 860,675 850,660 850,620 875,580 857,537 875,510"],
["#dbecff",360,-690,"240,388 275,377 280,390 297,392 308,435 335,465 330,552 352,555 367,587 345,592 325,602 292,580 285,545 275,535 250,540 232,528 240,526 250,500 238,480 243,460 225,458 225,440 235,425"],
["#dcedff",360,-690,"205,520 232,528 250,540 275,535 285,545 292,580 325,602 322,640 296,632 300,670 270,690 240,700 235,680 220,685 215,710 185,712 155,695 133,665 145,630 192,592 188,572 190,545 200,520"],
["#dbecff",360,-690,"325,602 345,592 372,590 362,630 338,655 335,690 348,715 330,740 290,750 275,780 270,810 235,790 228,765 205,730 180,745 155,730 152,705 155,695 185,712 215,710 220,685 235,680 240,700 270,690 300,670 296,632 322,640"],
["#dbecff",360,-690,"372,590 400,587 430,590 460,592 490,582 530,597 545,592 610,677 573,682 545,658 500,663 440,660 400,667 355,677 338,655 362,630"],
["#d8ebfe",360,-690,"338,655 355,677 400,667 440,660 500,663 545,658 573,682 545,720 520,735 470,770 458,790 400,820 375,838 340,837 300,846 270,810 275,780 290,750 330,740 348,715 335,690"],
["#c7e3fe",0,0,"933,-8 970,-13 1005,-25 1040,-20 1080,-24 1110,-27 1125,-35 1155,-30 1162,-7 1143,10 1142,45 1123,60 1125,130 1135,182 1105,185 1075,188 1060,205 1010,215 960,217 910,245 895,270 890,295 855,300 818,292 818,100 830,80 880,45 905,30 933,-8"],
["#d9ebfe",0,0,"478,18 493,5 515,40 540,55 565,40 588,75 595,100 630,120 625,162 595,158 580,135 560,168 530,185 500,205 490,215 495,190 490,165 460,157 468,120 475,62"],
["#d5e9fe",-540,-810,"1065,988 1067,940 1074,920 1082,935 1072,985"],
["#d9ebfe",0,0,"478,18 493,5 515,15 515,40 512,10"],
["#c2e0ff",-540,-810,"890,852 935,850 935,835 950,840 960,855 1000,832 1018,828 1015,872 980,878 955,895 950,920 915,910 905,890 920,870"],
["#cbe4ff",-540,-810,"875,865 890,852 920,870 905,890 915,910 945,918 947,930 900,915 885,905"],
["#d5e9fe",-540,-810,"900,920 947,930 915,985 905,965"],
["#cfe6ff",0,0,"210,165 235,165 260,182 298,185 305,150 325,125 345,95 370,118 365,140 375,175 360,210 347,250 345,262 312,252 305,268 275,262 245,265 212,258 240,220 245,200 222,185"],
["#c5e2ff",0,0,"475,62 468,120 460,157 490,165 495,190 490,215 475,235 450,252 440,240 400,248 390,280 370,290 345,262 347,250 360,210 375,175 410,120 415,85 440,68"],
["#d5e9ff",0,0,"630,120 660,156 700,150 735,148 760,130 818,100 818,292 715,293 640,325 575,342 575,410 540,378 470,345 480,310 472,290 455,288 485,240 500,205 530,185 560,168 580,135 595,158 625,162"],
["#dbecff",0,0,"370,290 390,280 400,248 440,240 450,252 475,235 490,215 500,205 485,240 455,288 435,310 380,385 335,417 300,390 297,370 315,350 340,350 365,330 375,305"],
["#daecfe",0,0,"455,288 472,290 480,310 470,345 540,378 575,410 600,445 630,478 655,455 685,465 730,500 770,545 800,557 755,575 755,590 720,592 705,620 680,628 660,618 630,620 600,618 560,600 520,585 480,570 475,545 445,535 425,495 385,480 345,465 328,455 335,417 380,385 435,310"],
["#daecfe",0,0,"575,342 640,325 680,308 715,293 760,293 818,292 855,300 832,318 870,348 915,348 915,370 870,378 835,382 790,403 778,440 775,465 730,500 685,465 655,455 630,478 600,445 575,410"],
["#cde6ff",0,0,"855,300 890,295 895,270 910,245 960,217 1010,215 1060,205 1075,188 1105,185 1135,182 1145,205 1172,240 1120,295 1145,298 1180,335 1195,365 1217,440 1195,450 1190,400 1165,352 1140,370 1110,390 1090,375 1090,398 1020,398 935,402 905,385 915,370 915,348 870,348 832,318"],
["#cfe6ff",0,0,"730,500 775,465 778,440 790,403 835,382 870,378 915,370 905,385 935,402 935,460 995,462 1002,500 968,498 915,510 915,582 960,615 958,635 975,655 975,675 940,655 900,665 892,640 890,610 840,595 825,565 800,557 770,545"],
["#c9e4ff",0,0,"505,615 560,600 600,618 630,620 660,618 680,628 705,620 720,592 755,590 755,575 800,557 825,565 840,595 890,610 892,640 900,665 940,655 975,675 925,962 905,940 890,922 870,928 855,920 913,825 885,802 860,795 825,775 790,788 755,770 735,788 700,797 670,790 640,792 622,775 622,735 590,728 580,685 540,670 515,658"],
["#c2e0ff",0,0,"247,525 243,490 250,455 270,435 297,427 300,460 310,470 345,465 385,480 425,495 445,535 475,545 480,570 520,585 560,600 505,615 470,585 430,570 410,572 375,558 350,532 330,525 312,540 280,540 250,535"],
["#73bcff",0,0,"172,312 180,355 225,350 232,375 230,403 272,410 265,435 250,455 243,490 247,525 210,525 210,500 195,485 145,475 135,455 100,435 68,405 90,392 110,390 97,350 120,318 150,310"],
["#40a1ff",0,0,"212,258 245,265 275,262 305,268 312,252 345,262 347,280 375,305 365,330 340,350 315,350 297,370 300,390 335,417 328,455 345,465 310,470 300,460 297,427 265,430 272,410 230,403 232,375 225,350 180,355 172,312 190,300 198,275"]
];
// Roughen each edge the same way whichever department it is drawn for.
function rough(a, b, out, depth) {
  const dx = b[0] - a[0], dy = b[1] - a[1], len = Math.hypot(dx, dy);
  if (len < 6 || depth > 3 || (depth === 0 && len > 68)) { out.push(b); return; }
  const sum = Math.sin((a[0] + b[0]) * 12.9898 + (a[1] + b[1]) * 78.233) * 43758.5453;
  const side = a[0] < b[0] || (a[0] === b[0] && a[1] < b[1]) ? 1 : -1;
  const k = (sum - Math.floor(sum) - 0.5) * 0.42 * side;
  const m = [(a[0] + b[0]) / 2 - dy * k, (a[1] + b[1]) / 2 + dx * k];
  rough(a, m, out, depth + 1);
  rough(m, b, out, depth + 1);
}
const map = document.getElementById("map");
for (const [fill, ox, oy, text] of departments) {
  const pts = text.split(" ").map(p => p.split(",").map(Number)).map(([x, y]) => [x + ox, y + oy]);
  const out = [];
  pts.forEach((p, i) => rough(p, pts[(i + 1) % pts.length], out, 0));
  const el = document.createElementNS("http://www.w3.org/2000/svg", "path");
  el.setAttribute("fill", fill);
  el.setAttribute("d", "M" + out.map(p => p[0].toFixed(1) + " " + p[1].toFixed(1)).join("L") + "Z");
  map.appendChild(el);
}
</script>
</body>
</html>
